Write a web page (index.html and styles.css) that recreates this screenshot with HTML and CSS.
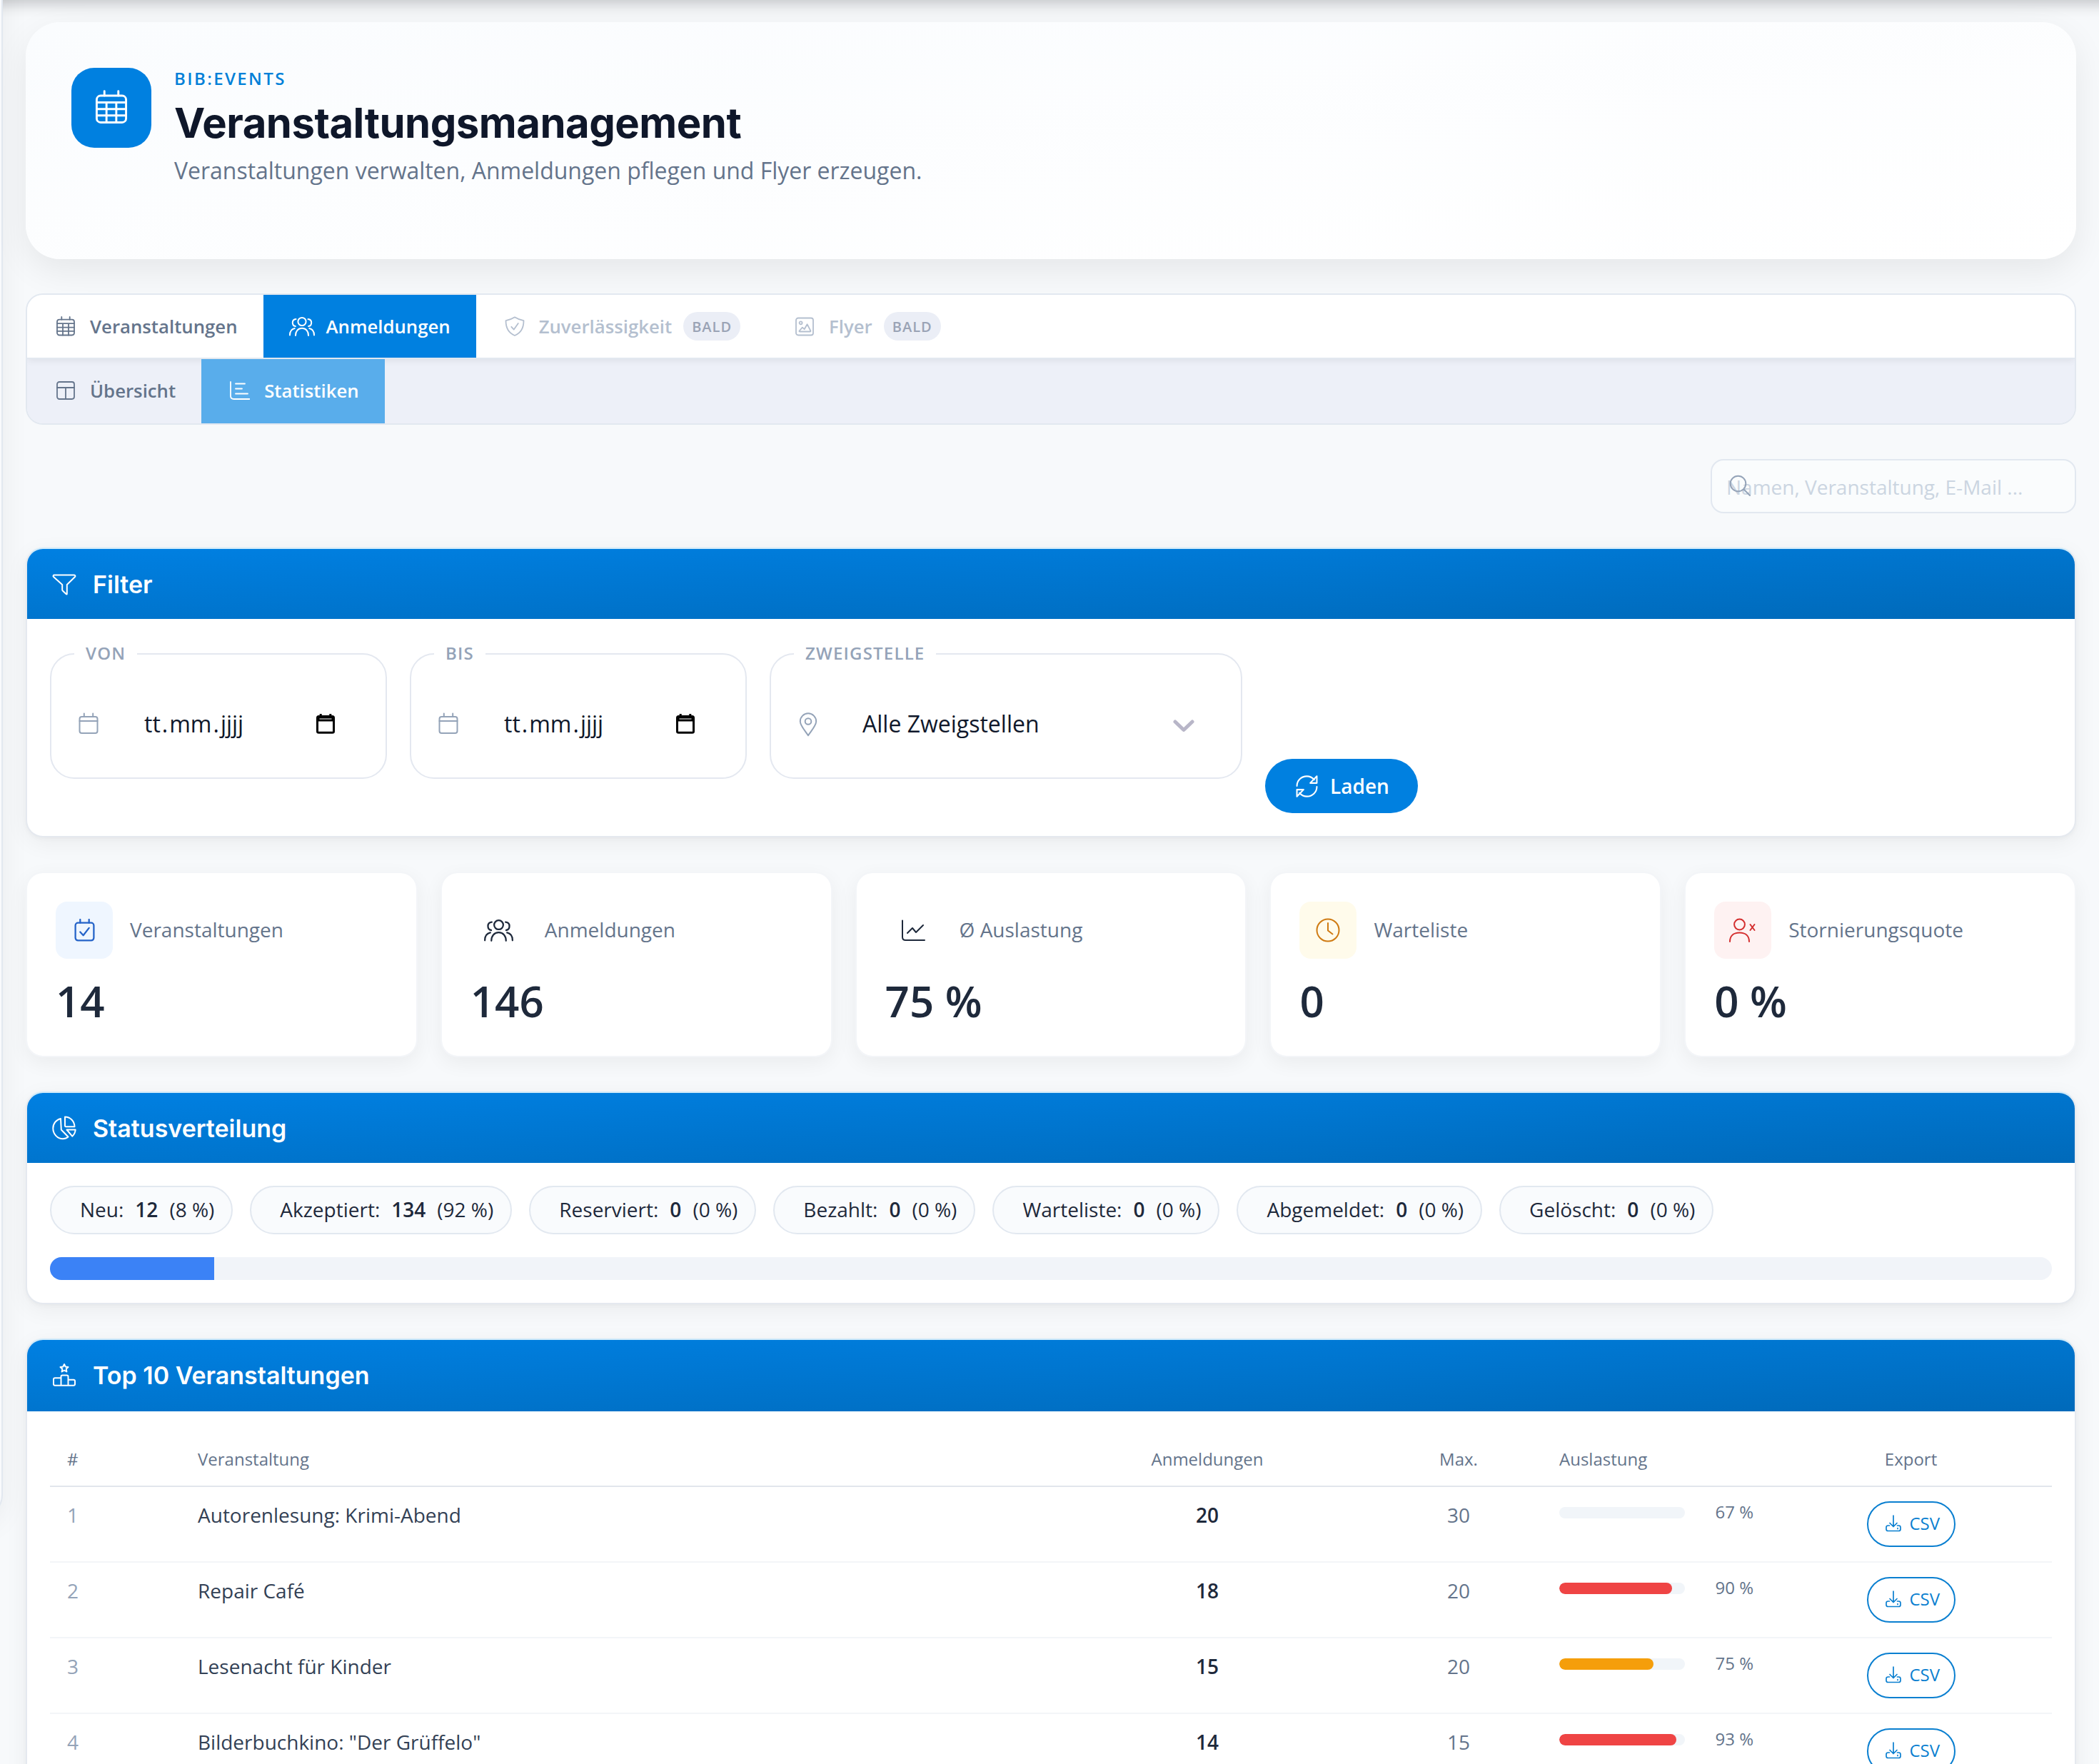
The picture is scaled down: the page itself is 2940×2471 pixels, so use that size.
FILE: index.html
```html
<!DOCTYPE html>
<html lang="de">
<head>
<meta charset="utf-8">
<title>Veranstaltungsmanagement</title>
<link rel="stylesheet" href="styles.css">
</head>
<body>
<svg class="sprite" aria-hidden="true">
  <symbol id="cal-grid" viewBox="0 0 28 28"><rect x="2" y="4.7" width="24" height="21.8" rx="3.2"/><path d="M8.3 1v3.7M19.7 1v3.7M2 10.2h24M2 15.6h24M2 20.9h24M10 10.2v16.3M18 10.2v16.3"/></symbol>
  <symbol id="users" viewBox="0 0 36 28"><circle cx="18" cy="7.5" r="5.6"/><path d="M9 27c0-6 3.5-10.2 9-10.2s9 4.200 9 10.200M9.500 4c-3 .3-4.700 2.300-4.700 5s1.700 4.700 4 5M26.500 4c3 .3 4.700 2.300 4.700 5s-1.700 4.700-4 5M1 26.500c0-5 2.300-8.500 6.700-9.500M35 26.500c0-5-2.300-8.500-6.700-9.500"/></symbol>
  <symbol id="shield" viewBox="0 0 28 28"><path d="M14 1.300c3.500 2.300 7.500 3.800 12.500 4.900 0 10.500-3.500 17-12.500 20.800C5 23.200 1.500 16.700 1.500 6.200 6.500 5.100 10.500 3.600 14 1.300zM9.300 14.800l3.500 3.800L18.800 10"/></symbol>
  <symbol id="image" viewBox="0 0 28 28"><rect x="2" y="2.500" width="24" height="24" rx="3"/><circle cx="8.600" cy="9.300" r="2"/><path d="M6.600 20.500l4.300-4.800 2.700 2.500 4-7 4.800 9.300q.3 1-.8 1H7.300q-1.200 0-.7-1z"/></symbol>
  <symbol id="layout" viewBox="0 0 28 28"><rect x="2" y="2" width="24" height="24" rx="3.200"/><path d="M2 10h24M14 10v16"/></symbol>
  <symbol id="bars" viewBox="0 0 28 28"><path d="M1 2v19.500Q1 26 5.500 26H27.500M8 4.500h13M8 11.500h9M8 18.500h17"/></symbol>
  <symbol id="search" viewBox="0 0 30 30"><circle cx="12.500" cy="12.500" r="10.800"/><path d="M20.500 20.500L29 29"/></symbol>
  <symbol id="funnel" viewBox="0 0 34 32"><path d="M3 2.500h28c1.300 0 1.900 1.500 1 2.500L20.800 16v12.800q0 1.200-1 .5l-5-4.800q-.6-.6-.6-1.300V16L2 5C1 4 1.700 2.500 3 2.500z"/></symbol>
  <symbol id="cal" viewBox="0 0 28 32"><rect x="1.500" y="6" width="25" height="23" rx="3"/><path d="M7.800 1.500V6M20.200 1.500V6M1.500 12h25"/></symbol>
  <symbol id="cal-native" viewBox="0 0 26 30"><path d="M1.500 6.500q0-2 2-2h19q2 0 2 2v19q0 1.800-2 1.800h-19q-2 0-2-1.800z"/><path d="M3 6h20v4H3zM6.200 1v4M19.800 1v4"/></symbol>
  <symbol id="pin" viewBox="0 0 26 34"><path d="M13 32.300C9 26 1.800 18.500 1.800 12.500a11.200 11.200 0 0 1 22.400 0C24.200 18.500 17 26 13 32.300z"/><circle cx="13" cy="12.500" r="4.300"/></symbol>
  <symbol id="chevron" viewBox="0 0 30 18"><path d="M3 3l12 11.500L27 3"/></symbol>
  <symbol id="refresh" viewBox="0 0 30 30"><path d="M1.500 14.500C1.500 7 7.500 1.300 15 1.300c4 0 7.500 1.900 10 4.700M28.500 1.300v9.200h-9zM28.500 15.500C28.500 23 22.500 28.700 15 28.700c-4 0-7.500-1.900-10-4.700M1.500 28.700v-9.200h9z"/></symbol>
  <symbol id="cal-check" viewBox="0 0 28 32"><rect x="1.500" y="5.500" width="25" height="24" rx="3.500"/><path d="M8 1v4.500M20 1v4.500M8 18l4.200 4.500L20 12.500"/></symbol>
  <symbol id="trend" viewBox="0 0 34 30"><path d="M2 1v23q0 4.500 4.500 4.500H33M9 18.500l7-7 5 6L31 7.500"/></symbol>
  <symbol id="clock" viewBox="0 0 34 34"><circle cx="17" cy="17" r="15.500"/><path d="M17 7v10.500l6.500 5"/></symbol>
  <symbol id="user-x" viewBox="0 0 40 34"><circle cx="15.500" cy="9" r="7.400"/><path d="M2 33c0-8 5-12.500 13.500-12.500S29 25 29 33M30.500 9l6 8M36.500 9l-6 8"/></symbol>
  <symbol id="pie" viewBox="0 0 34 34"><path d="M12 4C5.500 5.500 1.300 11 1.300 17.500c0 8 6 14.700 13.700 14.700 3 0 5.500-.9 7.500-2.700L12.800 19.500zM18 1.500c7.500 0 13.300 6 13.500 13.700h-12q-1.500 0-1.500-1.500zM20.500 19.500h12.200c-.3 3.800-2 7-4.500 9.200z"/></symbol>
  <symbol id="podium" viewBox="0 0 34 34"><path d="M12.500 31.700V19.200q0-1.800 1.800-1.800h6.400q1.800 0 1.800 1.800v12.500M12.500 21.300H4q-2 0-2 2v6.400q0 2 2 2h26q2 0 2-2v-3.900q0-2-2-2h-7.500M17 2l1.700 3.500 3.800.5-2.800 2.600.7 3.800-3.400-1.900-3.400 1.900.7-3.800L11.500 6l3.800-.5z"/></symbol>
  <symbol id="download" viewBox="0 0 24 24"><path d="M12 1v15.500M7 11.500l5 5 5-5M6.500 15H4.500Q2 15 2 17.500V20q0 2.500 2.500 2.500h15Q22 22.500 22 20v-2.500Q22 15 19.500 15h-2M18 18.700v.8"/></symbol>
</svg>

<div class="page">
  <div class="topbar-edge"></div>
  <div class="sidebar-edge"></div>

  <main class="content">
    <header class="hero">
      <div class="hero-icon"><svg class="ico ico-hero"><use href="#cal-grid"/></svg></div>
      <div>
        <div class="eyebrow">BIB:EVENTS</div>
        <h1>Veranstaltungsmanagement</h1>
        <p class="lead">Veranstaltungen verwalten, Anmeldungen pflegen und Flyer erzeugen.</p>
      </div>
    </header>

    <nav class="tabs">
      <div class="tab-row primary">
        <a class="tab"><span class="tab-ico"><svg class="ico s28"><use href="#cal-grid"/></svg></span>Veranstaltungen</a>
        <a class="tab active"><span class="tab-ico"><svg class="ico users"><use href="#users"/></svg></span>Anmeldungen</a>
        <a class="tab soon"><span class="tab-ico"><svg class="ico s28"><use href="#shield"/></svg></span>Zuverlässigkeit<span class="badge">BALD</span></a>
        <a class="tab soon"><span class="tab-ico"><svg class="ico s28"><use href="#image"/></svg></span>Flyer<span class="badge">BALD</span></a>
      </div>
      <div class="tab-row secondary">
        <a class="tab"><span class="tab-ico"><svg class="ico s28"><use href="#layout"/></svg></span>Übersicht</a>
        <a class="tab active"><span class="tab-ico"><svg class="ico s28"><use href="#bars"/></svg></span>Statistiken</a>
      </div>
    </nav>

    <div class="search">
      <span>Namen, Veranstaltung, E-Mail ...</span>
      <svg class="ico search-ico"><use href="#search"/></svg>
    </div>

    <section class="panel">
      <h2 class="panel-head"><span class="head-ico"><svg class="ico funnel"><use href="#funnel"/></svg></span>Filter</h2>
      <div class="panel-body filters">
        <fieldset class="field">
          <legend>VON</legend>
          <div class="control"><svg class="ico field-cal"><use href="#cal"/></svg><span class="date"><i>tt</i>.<i>mm</i>.<i>jjjj</i></span><svg class="ico native"><use href="#cal-native"/></svg></div>
        </fieldset>
        <fieldset class="field">
          <legend>BIS</legend>
          <div class="control"><svg class="ico field-cal"><use href="#cal"/></svg><span class="date"><i>tt</i>.<i>mm</i>.<i>jjjj</i></span><svg class="ico native"><use href="#cal-native"/></svg></div>
        </fieldset>
        <fieldset class="field wide">
          <legend>ZWEIGSTELLE</legend>
          <div class="control"><svg class="ico pin"><use href="#pin"/></svg><span class="select">Alle Zweigstellen</span><svg class="ico chevron"><use href="#chevron"/></svg></div>
        </fieldset>
        <button class="load"><svg class="ico refresh"><use href="#refresh"/></svg>Laden</button>
      </div>
    </section>

    <section class="stats">
      <div class="stat"><div class="stat-top"><span class="stat-ico blue"><svg class="ico cal-check"><use href="#cal-check"/></svg></span><span class="stat-label">Veranstaltungen</span></div><div class="stat-num">14</div></div>
      <div class="stat"><div class="stat-top"><span class="stat-ico"><svg class="ico users-lg"><use href="#users"/></svg></span><span class="stat-label">Anmeldungen</span></div><div class="stat-num">146</div></div>
      <div class="stat"><div class="stat-top"><span class="stat-ico"><svg class="ico trend"><use href="#trend"/></svg></span><span class="stat-label">Ø Auslastung</span></div><div class="stat-num">75 %</div></div>
      <div class="stat"><div class="stat-top"><span class="stat-ico amber"><svg class="ico s34"><use href="#clock"/></svg></span><span class="stat-label">Warteliste</span></div><div class="stat-num">0</div></div>
      <div class="stat"><div class="stat-top"><span class="stat-ico red"><svg class="ico user-x"><use href="#user-x"/></svg></span><span class="stat-label">Stornierungsquote</span></div><div class="stat-num">0 %</div></div>
    </section>

    <section class="panel">
      <h2 class="panel-head"><span class="head-ico"><svg class="ico s34"><use href="#pie"/></svg></span>Statusverteilung</h2>
      <div class="panel-body">
        <div class="chips">
          <span class="chip"><span>Neu:</span><b>12</b><span>(8 %)</span></span>
          <span class="chip"><span>Akzeptiert:</span><b>134</b><span>(92 %)</span></span>
          <span class="chip"><span>Reserviert:</span><b>0</b><span>(0 %)</span></span>
          <span class="chip"><span>Bezahlt:</span><b>0</b><span>(0 %)</span></span>
          <span class="chip"><span>Warteliste:</span><b>0</b><span>(0 %)</span></span>
          <span class="chip"><span>Abgemeldet:</span><b>0</b><span>(0 %)</span></span>
          <span class="chip"><span>Gelöscht:</span><b>0</b><span>(0 %)</span></span>
        </div>
        <div class="dist"><div class="dist-fill" style="width:8.2%"></div></div>
      </div>
    </section>

    <section class="panel top10">
      <h2 class="panel-head"><span class="head-ico"><svg class="ico s34"><use href="#podium"/></svg></span>Top 10 Veranstaltungen</h2>
      <div class="panel-body">
        <table>
          <colgroup><col class="c-rank"><col class="c-name"><col class="c-reg"><col class="c-max"><col class="c-load"><col class="c-exp"></colgroup>
          <thead><tr><th>#</th><th>Veranstaltung</th><th class="mid">Anmeldungen</th><th class="mid">Max.</th><th>Auslastung</th><th class="mid">Export</th></tr></thead>
          <tbody>
            <tr><td class="rank">1</td><td>Autorenlesung: Krimi-Abend</td><td class="mid reg">20</td><td class="mid max">30</td><td><div class="load-cell"><div class="meter"></div><span class="pct">67 %</span></div></td><td class="mid"><a class="csv"><svg class="ico dl"><use href="#download"/></svg>CSV</a></td></tr>
            <tr><td class="rank">2</td><td>Repair Café</td><td class="mid reg">18</td><td class="mid max">20</td><td><div class="load-cell"><div class="meter"><div class="high" style="width:90%"></div></div><span class="pct">90 %</span></div></td><td class="mid"><a class="csv"><svg class="ico dl"><use href="#download"/></svg>CSV</a></td></tr>
            <tr><td class="rank">3</td><td>Lesenacht für Kinder</td><td class="mid reg">15</td><td class="mid max">20</td><td><div class="load-cell"><div class="meter"><div class="medium" style="width:75%"></div></div><span class="pct">75 %</span></div></td><td class="mid"><a class="csv"><svg class="ico dl"><use href="#download"/></svg>CSV</a></td></tr>
            <tr><td class="rank">4</td><td>Bilderbuchkino: "Der Grüffelo"</td><td class="mid reg">14</td><td class="mid max">15</td><td><div class="load-cell"><div class="meter"><div class="high" style="width:93%"></div></div><span class="pct">93 %</span></div></td><td class="mid"><a class="csv"><svg class="ico dl"><use href="#download"/></svg>CSV</a></td></tr>
          </tbody>
        </table>
      </div>
    </section>
  </main>
</div>
</body>
</html>
```
FILE: styles.css
```css
* { box-sizing: border-box; }

body {
  margin: 0;
  background: #f7f9fb;
  font-family: "Open Sans", "Noto Sans", sans-serif;
  color: #1e293b;
}

h1, h2, p { margin: 0; }

.sprite { position: absolute; width: 0; height: 0; }

.page {
  position: relative;
  width: 2940px;
  height: 2471px;
  overflow: hidden;
}

/* Lower edge of the fixed app bar above the viewport */
.topbar-edge {
  position: absolute;
  top: -40px;
  left: -40px;
  right: -40px;
  height: 40px;
  box-shadow: 0 2px 24px rgba(0, 8, 16, .28);
}

/* Right edge of the sidebar card */
.sidebar-edge {
  position: absolute;
  top: -100px;
  left: -80px;
  width: 84px;
  height: 2226px;
  border: 2px solid #e2e8f0;
  border-radius: 32px;
  background: #f9fafc;
  box-shadow: 0 10px 40px rgba(8, 16, 28, .06);
}

.content {
  position: relative;
  display: flex;
  flex-direction: column;
  gap: 48px;
  padding: 31px 32px 0 36px;
}

.ico {
  display: block;
  flex: none;
  fill: none;
  stroke: currentColor;
  stroke-width: 2;
  stroke-linecap: round;
  stroke-linejoin: round;
}
.s28 { width: 28px; height: 28px; stroke-width: 1.8; }
.s34 { width: 34px; height: 34px; }

/* Hero */
.hero {
  display: flex;
  align-items: flex-start;
  gap: 32px;
  height: 332px;
  padding: 64px;
  border-radius: 48px;
  background: linear-gradient(to bottom right, #fafcfe, #fff);
  box-shadow: 0 16px 48px rgba(4, 12, 20, .075);
}
.hero-icon {
  display: flex;
  align-items: center;
  justify-content: center;
  width: 112px;
  height: 112px;
  padding-bottom: 2px;
  border-radius: 32px;
  background: #0080e0;
  color: #fff;
}
.ico-hero { width: 48px; height: 48px; stroke-width: 1.7; }
.eyebrow {
  font-size: 24px;
  font-weight: 600;
  line-height: 30px;
  letter-spacing: .1em;
  color: #0080d8;
}
h1 {
  margin-top: 12px;
  font-family: Inter, sans-serif;
  font-size: 58px;
  font-weight: 700;
  line-height: 70px;
  letter-spacing: -.0086em;
  color: #0f172a;
}
.lead {
  margin-top: 10px;
  font-size: 32px;
  line-height: 44px;
  letter-spacing: -.02px;
  color: #64748b;
}

/* Tabs */
.tabs {
  border: 2px solid #e2e8f0;
  border-radius: 24px;
  overflow: hidden;
}
.tab-row { display: flex; }
.tab-row.primary {
  position: relative;
  height: 90px;
  border-bottom: 2px solid #e2e8f0;
  background: #fff;
  box-shadow: 0 2px 10px rgba(4, 12, 20, .07);
}
.tab-row.secondary { height: 90px; background: #edf0f8; }
.tab {
  display: flex;
  align-items: center;
  gap: 16px;
  padding: 0 36px;
  font-size: 25.75px;
  font-weight: 600;
  color: #64748b;
}
.primary .active { background: #0080e0; color: #fff; }
.secondary .tab { position: relative; padding-bottom: 2px; }
.secondary .active { background: #59adeb; color: #fff; }
.tab.soon { color: #b4bfcf; }
.tab-ico { display: flex; justify-content: center; width: 36px; }
.users { width: 36px; height: 28px; }
.badge {
  display: flex;
  align-items: center;
  height: 40px;
  padding: 0 12px;
  border-radius: 20px;
  background: #ebeef6;
  font-size: 20px;
  letter-spacing: .05em;
  color: #9aa3b5;
}

/* Search */
.search {
  position: relative;
  display: flex;
  align-items: center;
  align-self: flex-end;
  width: 512px;
  height: 76px;
  padding: 2px 18px 0 20px;
  border: 2px solid #e2e8f0;
  border-radius: 18px;
  background: #fafcfd;
  font-size: 28px;
  color: #cbd5e1;
}
.search-ico {
  position: absolute;
  top: 20px;
  left: 24px;
  width: 30px;
  height: 30px;
  color: #94a3b8;
}

/* Panels */
.panel {
  border: 2px solid #e5e9ef;
  border-top-color: #cfeafa;
  border-radius: 24px;
  background: #fff;
  box-shadow: 0 8px 32px rgba(4, 12, 20, .055), 0 2px 6px rgba(4, 12, 20, .035);
}
.panel-head {
  display: flex;
  align-items: center;
  gap: 20px;
  height: 98px;
  padding: 0 32px;
  border-radius: 22px 22px 0 0;
  background: linear-gradient(to bottom right, #0080e2, #006aba);
  font-family: Inter, sans-serif;
  font-size: 34px;
  font-weight: 600;
  color: #fff;
}
.top10 .panel-head { height: 100px; padding-bottom: 2px; }
.head-ico { display: flex; justify-content: center; width: 40px; }
.funnel { width: 34px; height: 32px; margin-top: 2px; }
.panel-body { padding: 32px; }

/* Filter */
.filters { display: flex; align-items: flex-end; gap: 32px; }
.field {
  width: 472px;
  min-width: 0;
  margin: 0 0 48px;
  padding: 0 32px;
  border: 2px solid #e4e8f0;
  border-radius: 34px;
}
.field.wide { width: 662px; }
legend {
  padding: 0 16px 3px;
  font-size: 24px;
  font-weight: 600;
  line-height: 31px;
  letter-spacing: .05em;
  color: #94a3b8;
}
.control {
  display: flex;
  align-items: center;
  height: 156px;
  padding: 4px 0 0 6px;
  font-size: 32px;
  color: #0f172a;
}
.field-cal { width: 28px; height: 32px; margin-top: 2px; color: #94a3b8; }
.date { width: 243px; margin-left: 62px; }
.date i { padding: 0 2px; font-style: normal; }
.native { width: 26px; height: 30px; margin-top: 1px; color: #000; stroke-width: 3; stroke-linecap: butt; }
.pin { width: 26px; height: 34px; margin: 3px 0 0 1px; color: #94a3b8; }
.select { width: 435px; margin-left: 63px; }
.chevron { width: 30px; height: 18px; margin-top: 7px; color: #b8b6c8; stroke-width: 5; }
.load {
  display: flex;
  align-items: center;
  gap: 17px;
  width: 214px;
  height: 76px;
  padding: 0 41px 0 43px;
  border: 0;
  border-radius: 38px;
  background: #0080e0;
  font: 600 28px "Open Sans", sans-serif;
  color: #fff;
}
.refresh { width: 31px; height: 31px; }

/* Stats */
.stats { display: grid; grid-template-columns: repeat(5, 1fr); gap: 32px; }
.stat {
  height: 260px;
  padding: 40px;
  border: 2px solid #f3f5f8;
  border-radius: 24px;
  background: #fff;
  background-clip: padding-box;
  box-shadow: 0 8px 28px rgba(4, 12, 20, .055);
}
.stat-top {
  display: flex;
  align-items: center;
  gap: 24px;
  font-size: 28px;
  color: #64748b;
}
.stat-label { padding-bottom: 2px; }
.stat-ico {
  display: flex;
  align-items: center;
  justify-content: center;
  width: 80px;
  height: 80px;
  border-radius: 16px;
  color: #1e293b;
}
.stat-ico.blue { background: #eff6ff; color: #2563c8; }
.stat-ico.amber { background: #fffbeb; color: #cf7a12; }
.stat-ico.red { background: #fef2f2; color: #d42f2f; }
.cal-check { width: 29px; height: 33px; stroke-width: 2.2; }
.users-lg { width: 41px; height: 32px; }
.trend { width: 34px; height: 31px; margin-right: 2px; }
.user-x { width: 40px; height: 34px; }
.stat-num {
  margin-top: 23px;
  font-size: 60px;
  font-weight: 600;
  line-height: 72px;
}

/* Status distribution */
.chips { display: flex; gap: 24px; }
.chip {
  display: flex;
  align-items: center;
  gap: 16px;
  height: 68px;
  padding: 0 24px 2px 40px;
  border: 2px solid #e2e8f0;
  border-radius: 34px;
  background: #f9fbfd;
  font-size: 28px;
}
.chip b { font-weight: 600; }
.dist {
  height: 32px;
  margin-top: 32px;
  border-radius: 16px;
  overflow: hidden;
  background: #f1f4f9;
}
.dist-fill { height: 100%; background: #3b82f6; }

/* Table */
table { width: 100%; table-layout: fixed; border-spacing: 0; }
.c-rank { width: 183px; }
.c-name { width: 1203px; }
.c-reg { width: 470px; }
.c-max { width: 234px; }
.c-load { width: 319px; }
.c-exp { width: 395px; }
th {
  padding: 18px 24px 21px;
  border-bottom: 2px solid #e2e6ec;
  font-size: 24px;
  font-weight: 400;
  line-height: 33px;
  text-align: left;
  color: #64748b;
}
td {
  height: 106px;
  padding: 20px 24px;
  border-bottom: 2px solid #f3f5f8;
  font-size: 28px;
  line-height: 38px;
  vertical-align: top;
  color: #334155;
}
.mid { text-align: center; }
.rank { color: #94a3b8; }
.reg { font-weight: 600; color: #1e293b; }
.max { color: #64748b; }
.load-cell { display: flex; gap: 16px; }
.meter {
  flex: none;
  width: 176px;
  height: 16px;
  margin-top: 8px;
  border-radius: 8px;
  overflow: hidden;
  background: #f1f5f9;
}
.meter div { height: 100%; border-radius: 8px; }
.high { background: #ef4444; }
.medium { background: #f59e0b; }
.pct {
  flex: none;
  width: 80px;
  font-size: 24px;
  line-height: 30px;
  text-align: right;
  color: #64748b;
}
.csv {
  display: inline-flex;
  align-items: center;
  gap: 11px;
  width: 124px;
  height: 64px;
  padding: 0 0 2px 23px;
  border: 2px solid #0a7fd0;
  border-radius: 32px;
  font-size: 24px;
  font-weight: 500;
  color: #0a7fd0;
  vertical-align: top;
}
.dl { width: 24px; height: 24px; stroke-width: 1.7; }
```
